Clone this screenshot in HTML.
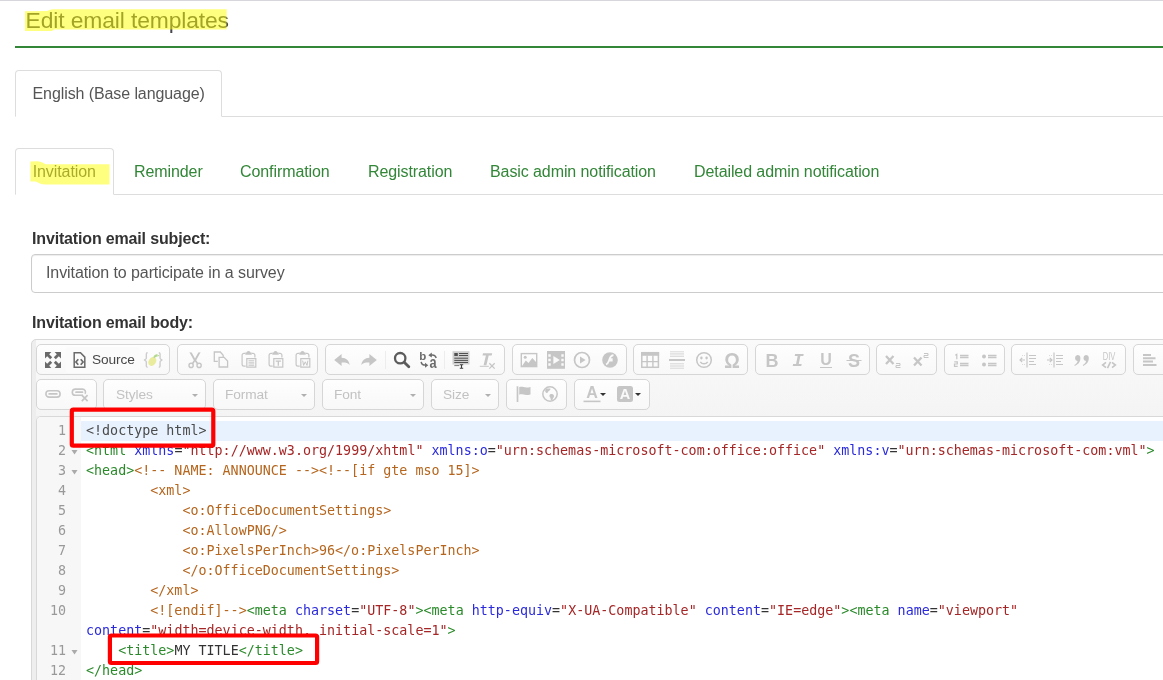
<!DOCTYPE html>
<html lang="en">
<head>
<meta charset="utf-8">
<title>Edit email templates</title>
<style>
*{box-sizing:border-box;margin:0;padding:0}
html,body{width:1163px;height:680px;overflow:hidden;background:#fff}
body{position:relative;will-change:transform;font-family:"Liberation Sans",Arial,sans-serif;font-size:16px;color:#333;letter-spacing:-.09px}
.abs{position:absolute}
#topline{left:0;top:0;width:1163px;height:1px;background:#d6d6dc}
#title{left:25.5px;top:6.5px;font-size:22.86px;letter-spacing:-.12px;line-height:26px;color:#46464e;white-space:nowrap;font-weight:400}
#greenline{left:15px;top:46px;width:1148px;height:2px;background:#328637}
/* language tab */
#langline{left:15px;top:116px;width:1148px;height:1px;background:#ddd}
#langtab{left:15px;top:70px;width:207px;height:47px;border:1px solid #ddd;border-bottom-color:#fff;border-radius:4px 4px 0 0;background:#fff;color:#555;line-height:45px;padding-left:16.5px;white-space:nowrap}
/* sub tabs */
#subline{left:15px;top:194px;width:1148px;height:1px;background:#ddd}
#subtab{left:15px;top:148px;width:99px;height:47px;border:1px solid #ddd;border-bottom-color:#fff;border-radius:4px 4px 0 0;background:#fff}
.tab{top:148px;height:47px;line-height:47px;color:#328637;white-space:nowrap}
.lbl{left:32px;letter-spacing:-.16px;font-weight:700;color:#333;white-space:nowrap;line-height:20px}
#subject{left:31px;top:254px;width:1150px;height:39px;border:1px solid #ccc;border-radius:4px;box-shadow:inset 0 1px 1px rgba(0,0,0,.075);color:#555;line-height:36px;padding-left:14px;white-space:nowrap}
/* editor chrome */
#cke{left:31px;top:339px;width:1150px;height:360px;border:1px solid #d8d8d8;border-radius:5px 0 0 0;background:#eee}
#cketop{left:36px;top:340px;width:1140px;height:76px;background:linear-gradient(#fafafa,#f4f4f4)}
.grp{height:31px;border:1px solid #d6d6d6;border-radius:5px;background:linear-gradient(#fefefe,#f8f8f8)}
.r1{top:344px}
.r2{top:379px}
.ico{width:16px;height:16px;overflow:visible}
.combo{color:#c2c2c2;font-size:13.7px;line-height:29px;padding-left:13px;white-space:nowrap}
.combo i{position:absolute;right:7.3px;top:13.5px;width:0;height:0;border-left:3.2px solid transparent;border-right:3.2px solid transparent;border-top:3.2px solid #b0b0b0}
.sep{width:1px;height:18px;background:#ededed}
/* ace */
#ace{left:36px;top:416px;width:1140px;height:280px;border:1px solid #d8d8d8;border-radius:5px 0 0 0;background:#fff;overflow:hidden}
#gutter{left:37px;top:417px;width:44px;height:270px;background:#f7f7f7;border-radius:4px 0 0 0}
#active{left:81px;top:421px;width:1090px;height:20px;background:#e8f2fe}
.ln{left:37px;width:29px;text-align:right;color:#999}
.fold{left:71px;width:7px;height:20px}
.code,.ln{letter-spacing:0;font-family:"DejaVu Sans Mono","Liberation Mono",monospace;font-size:13.354px;line-height:20px;height:20px;white-space:pre}
.code{left:86px;color:#333}
.t{color:#2a8a2a}.a{color:#2a2adc}.s{color:#a52626}.c{color:#b5651d}.d{color:#4a4a4a}
</style>
</head>
<body>
<div id="topline" class="abs"></div>
<h3 id="title" class="abs">Edit email templates</h3>
<div id="greenline" class="abs"></div>

<div id="langline" class="abs"></div>
<div id="langtab" class="abs">English (Base language)</div>

<div id="subline" class="abs"></div>
<div id="subtab" class="abs"></div>
<div class="abs tab" style="left:32.7px;color:#555">Invitation</div>
<div class="abs tab" style="left:134px">Reminder</div>
<div class="abs tab" style="left:240px">Confirmation</div>
<div class="abs tab" style="left:368px">Registration</div>
<div class="abs tab" style="left:490px">Basic admin notification</div>
<div class="abs tab" style="left:694px">Detailed admin notification</div>

<label class="abs lbl" style="top:228.5px">Invitation email subject:</label>
<div id="subject" class="abs">Invitation to participate in a survey</div>
<label class="abs lbl" style="top:313px">Invitation email body:</label>

<div id="cke" class="abs"></div>
<div id="cketop" class="abs"></div>
<!--TB-START-->
<div class="abs grp r1" style="left:36px;width:134px"></div>
<div class="abs grp r1" style="left:177px;width:141px"></div>
<div class="abs grp r1" style="left:325px;width:180px"></div>
<div class="abs grp r1" style="left:512px;width:115px"></div>
<div class="abs grp r1" style="left:633px;width:115px"></div>
<div class="abs grp r1" style="left:755px;width:115px"></div>
<div class="abs grp r1" style="left:876px;width:61px"></div>
<div class="abs grp r1" style="left:944px;width:61px"></div>
<div class="abs grp r1" style="left:1011px;width:115px"></div>
<div class="abs grp r1" style="left:1133px;width:68px"></div>
<div class="abs grp r2" style="left:36px;width:61px"></div>
<div class="abs grp r2" style="left:506px;width:61px"></div>
<div class="abs grp r2" style="left:574px;width:76px"></div>
<div class="abs" style="left:66px;top:347px;width:74px;height:26px;background:#fbfbfb;border-radius:3px"></div>
<svg class="abs ico" style="left:45.0px;top:352.0px;color:#6a6a6a" viewBox="0 0 16 16"><g fill="currentColor"><path d="M0 0h6.4L4.2 2.2 7.2 5.2 5.2 7.2 2.2 4.2 0 6.4z"/><g transform="rotate(90 8 8)"><path d="M0 0h6.4L4.2 2.2 7.2 5.2 5.2 7.2 2.2 4.2 0 6.4z"/></g><g transform="rotate(180 8 8)"><path d="M0 0h6.4L4.2 2.2 7.2 5.2 5.2 7.2 2.2 4.2 0 6.4z"/></g><g transform="rotate(270 8 8)"><path d="M0 0h6.4L4.2 2.2 7.2 5.2 5.2 7.2 2.2 4.2 0 6.4z"/></g></g></svg>
<svg class="abs ico" style="left:71.5px;top:352.0px;color:#6a6a6a" viewBox="0 0 16 16"><path d="M2.2 .800h6.300l4.3 4.300v10.100H2.200z" fill="none" stroke="currentColor" stroke-width="1.5"/><path d="M6.3 7.200L3.9 10l2.4 2.800M8.7 7.200l2.4 2.8-2.4 2.8" fill="none" stroke="currentColor" stroke-width="1.7"/></svg>
<div class="abs" style="left:92px;top:350px;font-size:13.700px;line-height:20px;color:#484848;white-space:nowrap">Source</div>
<svg class="abs ico" style="left:145.3px;top:352.0px;color:#c6c6c6" viewBox="0 0 16 16"><path d="M2.6 .800C.600 .800 1.6 3.6 1.3 6.2 1.2 7.4-.600 7.6-.600 8s1.8.600 1.9 1.800c.300 2.6-.700 5.4 1.3 5.400M13.8 .800c2 0 1 2.8 1.3 5.4.100 1.2 1.9 1.4 1.9 1.800s-1.8.600-1.9 1.800c-.300 2.6.700 5.4-1.3 5.4" fill="none" stroke="#cdcdcd" stroke-width="1.4"/><ellipse cx="7.3" cy="9.5" rx="3.6" ry="4.5" transform="rotate(30 7.3 9.5)" fill="#e9ec9c"/><path d="M8.2 5.800c.300-2 1.6-3.2 4.4-3.8-.300 2.3-1.8 3.6-4.4 3.800z" fill="#b4d88c"/><path d="M9 5.500c1.5-1 3-1.8 5-2" fill="none" stroke="#b4d88c" stroke-width="1"/></svg>
<svg class="abs ico" style="left:187.0px;top:352.0px;color:#c6c6c6" viewBox="0 0 16 16"><path d="M2.4 .300l2.3 .100 3.3 6 3.3-6 2.3-.100-4.4 8 2.2 3.2-1.4.800L8 9.600l-2 2.7-1.4-.800L6.8 8.300z" fill="currentColor"/><circle cx="4.1" cy="13.4" r="2.1" fill="none" stroke="currentColor" stroke-width="1.4"/><circle cx="12.1" cy="13.4" r="2.1" fill="none" stroke="currentColor" stroke-width="1.4"/></svg>
<svg class="abs ico" style="left:212.5px;top:352.0px;color:#c6c6c6" viewBox="0 0 16 16"><path d="M4.8 9.300H1.300V0H7.300L10.2 3.200V5" fill="none" stroke="currentColor" stroke-width="1.3"/><path d="M6.1 5.400h5l3.5 3.600v6H6.100z" fill="none" stroke="currentColor" stroke-width="1.3"/></svg>
<svg class="abs ico" style="left:240.5px;top:352.0px;color:#c6c6c6" viewBox="0 0 16 16"><path d="M4.2 1.300H3a1.9 1.9 0 0 0-1.9 1.900v9a1.9 1.9 0 0 0 1.9 1.900h1.700M10.8 1.300H12a1.9 1.9 0 0 1 1.9 1.900v2.3" fill="none" stroke="currentColor" stroke-width="1.2"/><path d="M4.3 .600h1.200a2 1.5 0 0 1 4 0h1.200v2.200H4.300z" fill="currentColor"/><path d="M5.8 6.600h9v8.600h-9z" fill="none" stroke="currentColor" stroke-width="1.2"/><path d="M7.5 8.700h5.700M7.5 10.300h5.700M7.5 11.900h5.700M7.5 13.400h5.7" stroke="currentColor" stroke-width=".9"/></svg>
<svg class="abs ico" style="left:267.5px;top:352.0px;color:#c6c6c6" viewBox="0 0 16 16"><path d="M4.2 1.300H3a1.9 1.9 0 0 0-1.9 1.900v9a1.9 1.9 0 0 0 1.9 1.900h1.700M10.8 1.300H12a1.9 1.9 0 0 1 1.9 1.900v2.3" fill="none" stroke="currentColor" stroke-width="1.2"/><path d="M4.3 .600h1.200a2 1.5 0 0 1 4 0h1.200v2.200H4.300z" fill="currentColor"/><path d="M5.8 6.600h9v8.600h-9z" fill="none" stroke="currentColor" stroke-width="1.2"/><path d="M7.7 9.100h5.200M10.3 9.100v4.7" stroke="currentColor" stroke-width="1.3" fill="none"/></svg>
<svg class="abs ico" style="left:294.5px;top:352.0px;color:#c6c6c6" viewBox="0 0 16 16"><path d="M4.2 1.300H3a1.9 1.9 0 0 0-1.9 1.900v9a1.9 1.9 0 0 0 1.9 1.900h1.700M10.8 1.300H12a1.9 1.9 0 0 1 1.9 1.900v2.3" fill="none" stroke="currentColor" stroke-width="1.2"/><path d="M4.3 .600h1.200a2 1.5 0 0 1 4 0h1.200v2.200H4.300z" fill="currentColor"/><path d="M5.8 6.600h9v8.600h-9z" fill="none" stroke="currentColor" stroke-width="1.2"/><path d="M7.7 8.600l.9 4.8 1.7-3.6 1.7 3.6.9-4.8" stroke="currentColor" stroke-width="1" fill="none"/></svg>
<svg class="abs ico" style="left:334.3px;top:352.0px;color:#c6c6c6" viewBox="0 0 16 16"><path d="M7.6 2v3.800c4.6.300 7.5 2.6 8.1 7.2-1.8-2.3-4.2-2.6-8.1-2.500V14L.200 8z" fill="currentColor"/></svg>
<svg class="abs ico" style="left:360.5px;top:352.0px;color:#c6c6c6" viewBox="0 0 16 16"><path d="M8.4 2v3.800c-4.6.300-7.5 2.6-8.1 7.2 1.8-2.3 4.2-2.6 8.1-2.500V14l7.4-6z" fill="currentColor"/></svg>
<svg class="abs ico" style="left:479.0px;top:352.0px;color:#c6c6c6" viewBox="0 0 16 16"><path d="M4 1.300h9.200l-.5 2.300h-3l-2.3 9.700H4.600l2.3-9.700h-3.400z" fill="currentColor"/><path d="M.800 14.300h9" stroke="currentColor" stroke-width="1"/><path d="M10.3 11.200l5.4 5.400M15.7 11.200l-5.4 5.4" stroke="currentColor" stroke-width="1.3"/></svg>
<svg class="abs ico" style="left:520.8px;top:352.0px;color:#c6c6c6" viewBox="0 0 16 16"><rect x=".300" y="1.6" width="15.4" height="13" fill="none" stroke="currentColor" stroke-width="1.4"/><circle cx="4.2" cy="5.2" r="1.5" fill="currentColor"/><path d="M1 14l3.8-5.5 2.7 2.5 3.8-5 3.7 4v4z" fill="currentColor"/></svg>
<svg class="abs ico" style="left:548.0px;top:352.0px;color:#c6c6c6" viewBox="0 0 16 16"><path d="M-1-1h18v17.800H-1z" fill="currentColor"/><path d="M.300 2.200h2.400v2.600H.300zM.300 6.700h2.400v2.600H.300zM.300 11.200h2.400v2.600H.300zM13.3 2.200h2.400v2.600h-2.400zM13.3 6.700h2.400v2.600h-2.400zM13.3 11.200h2.400v2.600h-2.400z" fill="#fafafa"/><path d="M5.4 4l6.4 4-6.4 4z" fill="#fafafa"/></svg>
<svg class="abs ico" style="left:574.3px;top:352.0px;color:#c6c6c6" viewBox="0 0 16 16"><circle cx="8" cy="8" r="7.5" fill="none" stroke="currentColor" stroke-width="1.7"/><path d="M6 4.400l5.6 3.600L6 11.600z" fill="currentColor"/></svg>
<svg class="abs ico" style="left:602.0px;top:352.0px;color:#c6c6c6" viewBox="0 0 16 16"><circle cx="8" cy="8" r="7.8" fill="currentColor"/><path d="M11.5 3.200c-2.5.2-3.3 1.8-4 3.800h2.300v1.600H7c-.7 2-1.4 3.4-3 3.8" fill="none" stroke="#fafafa" stroke-width="1.7"/></svg>
<svg class="abs ico" style="left:641.8px;top:352.0px;color:#c6c6c6" viewBox="0 0 16 16"><rect x="-.200" y=".700" width="16.6" height="14.6" fill="none" stroke="currentColor" stroke-width="1.5"/><rect x="-.900" y="0" width="18" height="3.8" fill="currentColor"/><path d="M-.200 9.600h16.600M5.1 3.500v12M10.9 3.500v12" stroke="currentColor" stroke-width="1.4"/></svg>
<svg class="abs ico" style="left:669.0px;top:352.0px;color:#c6c6c6" viewBox="0 0 16 16"><path d="M1 -.300h14M1 1.300h14M1 2.900h14M1 4.500h14M1 11.600h14M1 13.200h14M1 14.800h14M1 16.400h14" stroke="#dedede" stroke-width="1"/><path d="M0 8h16" stroke="currentColor" stroke-width="2"/></svg>
<svg class="abs ico" style="left:695.9px;top:352.0px;color:#c6c6c6" viewBox="0 0 16 16"><circle cx="8" cy="8" r="7.3" fill="none" stroke="currentColor" stroke-width="1.5"/><ellipse cx="5.4" cy="6" rx="1.2" ry="1.4" fill="currentColor"/><ellipse cx="10.6" cy="6" rx="1.2" ry="1.4" fill="currentColor"/><path d="M4.3 9.800c1.7 2.6 5.7 2.6 7.4 0" fill="none" stroke="currentColor" stroke-width="1.5"/></svg>
<svg class="abs ico" style="left:723.7px;top:352.0px;color:#c6c6c6" viewBox="0 0 16 16"><text x="8" y="15.7" font-size="21.5" font-weight="700" text-anchor="middle" textLength="15.5" lengthAdjust="spacingAndGlyphs" font-family='"Liberation Sans",Arial,sans-serif' fill="currentColor">Ω</text></svg>
<svg class="abs ico" style="left:764.3px;top:352.0px;color:#c6c6c6" viewBox="0 0 16 16"><text x="8" y="14.7" font-size="18" font-weight="700" text-anchor="middle" font-family='"Liberation Sans",Arial,sans-serif' fill="currentColor">B</text></svg>
<svg class="abs ico" style="left:789.8px;top:352.0px;color:#c6c6c6" viewBox="0 0 16 16"><text x="8" y="14.3" font-size="19" font-weight="700" font-style="italic" text-anchor="middle" font-family='"Liberation Mono","Courier New",monospace' fill="currentColor">I</text></svg>
<svg class="abs ico" style="left:818.4px;top:352.0px;color:#c6c6c6" viewBox="0 0 16 16"><text x="8" y="12.8" font-size="16" font-weight="700" text-anchor="middle" font-family='"Liberation Sans",Arial,sans-serif' fill="currentColor">U</text><path d="M2 15.500h12" stroke="currentColor" stroke-width="1"/></svg>
<svg class="abs ico" style="left:845.5px;top:352.0px;color:#c6c6c6" viewBox="0 0 16 16"><text x="8" y="14.5" font-size="18" font-weight="700" text-anchor="middle" font-family='"Liberation Sans",Arial,sans-serif' fill="currentColor">S</text><path d="M.5 8.500h15" stroke="currentColor" stroke-width="1"/></svg>
<svg class="abs ico" style="left:885.0px;top:352.0px;color:#c6c6c6" viewBox="0 0 16 16"><path d="M1 4l7.5 8M8.5 4L1 12" stroke="currentColor" stroke-width="2.3" fill="none"/><path d="M11 11.500h4v2h-4v2h4.5" stroke="currentColor" stroke-width="1" fill="none"/></svg>
<svg class="abs ico" style="left:912.5px;top:352.0px;color:#c6c6c6" viewBox="0 0 16 16"><g transform="translate(0 1.5)"><path d="M1 4l7.5 8M8.5 4L1 12" stroke="currentColor" stroke-width="2.3" fill="none"/></g><path d="M11 1.500h4v2h-4v2h4.5" stroke="currentColor" stroke-width="1" fill="none"/></svg>
<svg class="abs ico" style="left:953.1px;top:352.0px;color:#c6c6c6" viewBox="0 0 16 16"><path d="M7 3.500h8.500M7 5.500h8.500M7 11.500h8.500M7 13.500h8.5" stroke="currentColor" stroke-width="1.3"/><path d="M2.3 3.300l1.5-1v5M1.3 9.800h3v2.200H1.500v2.300H4.7" fill="none" stroke="currentColor" stroke-width="1.2"/></svg>
<svg class="abs ico" style="left:980.6px;top:352.0px;color:#c6c6c6" viewBox="0 0 16 16"><path d="M7 3.500h8.500M7 5.500h8.500M7 11.500h8.500M7 13.500h8.5" stroke="currentColor" stroke-width="1.3"/><circle cx="3" cy="4.4" r="2" fill="currentColor"/><circle cx="3" cy="12.4" r="2" fill="currentColor"/></svg>
<svg class="abs ico" style="left:1019.8px;top:352.0px;color:#c6c6c6" viewBox="0 0 16 16"><path d="M7 .5v15" stroke="currentColor" stroke-width="1.2"/><path d="M9 3.500h7M9 6.500h7M9 9.500h5M9 12.500h7" stroke="currentColor" stroke-width="1.2"/><path d="M0 8h5M2.2 5.800L0 8l2.2 2.2" fill="none" stroke="currentColor" stroke-width="1.2"/><path d="M2 3.500h4M2 12.500h4" stroke="#dcdcdc" stroke-width="1" stroke-dasharray="1 1"/></svg>
<svg class="abs ico" style="left:1047.0px;top:352.0px;color:#c6c6c6" viewBox="0 0 16 16"><path d="M7 .5v15" stroke="currentColor" stroke-width="1.2"/><path d="M9 3.500h7M9 6.500h7M9 9.500h5M9 12.500h7" stroke="currentColor" stroke-width="1.2"/><path d="M0 8h5M2.8 5.800L5 8l-2.2 2.2" fill="none" stroke="currentColor" stroke-width="1.2"/><path d="M2 3.500h4M2 12.500h4" stroke="#dcdcdc" stroke-width="1" stroke-dasharray="1 1"/></svg>
<svg class="abs ico" style="left:1074.0px;top:352.0px;color:#c6c6c6" viewBox="0 0 16 16"><path d="M3.4 3.100a3 3 0 0 1 3 3c0 3.8-2.2 6.6-5.6 7.800l-.4-.8c1.8-1 3-2.4 3.2-4.100a3 3 0 0 1-.2-5.900z" fill="currentColor"/><path d="M11.8 3.100a3 3 0 0 1 3 3c0 3.8-2.2 6.6-5.6 7.800l-.4-.8c1.8-1 3-2.4 3.2-4.100a3 3 0 0 1-.2-5.900z" fill="currentColor"/></svg>
<svg class="abs ico" style="left:1101.2px;top:352.0px;color:#c6c6c6" viewBox="0 0 16 16"><text x="8" y="8" font-size="11" text-anchor="middle" textLength="12.5" lengthAdjust="spacingAndGlyphs" font-family='"Liberation Sans",Arial,sans-serif' fill="currentColor">DIV</text><path d="M5 10.300L1.6 13l3.4 2.600M11 10.300l3.4 2.7-3.4 2.600M9.5 9.800l-3 6.4" fill="none" stroke="currentColor" stroke-width="1.6"/></svg>
<svg class="abs ico" style="left:1142.0px;top:352.0px;color:#c6c6c6" viewBox="0 0 16 16"><path d="M1 3h8M1 6.300h12.500M1 9.600h10M1 12.900h13.5" stroke="currentColor" stroke-width="2"/></svg>
<svg class="abs ico" style="left:394.0px;top:352.0px;color:#5c5c5c" viewBox="0 0 16 16"><circle cx="6.2" cy="6.2" r="5.2" fill="none" stroke="currentColor" stroke-width="2.3"/><path d="M10.2 10.200l4.6 4.6" stroke="currentColor" stroke-width="2.8" stroke-linecap="round"/></svg>
<svg class="abs ico" style="left:420.3px;top:352.0px;color:#6c6c6c" viewBox="0 0 16 16"><text x="-.800" y="7.7" font-size="11.5" font-weight="700" font-family='"Liberation Sans",Arial,sans-serif' fill="currentColor">b</text><text transform="translate(9.4 16.3) scale(.75 1)" font-size="17" font-weight="700" font-family='"Liberation Sans",Arial,sans-serif' fill="currentColor">a</text><path d="M10.5 3.300c2.8-.800 4.8.300 5.8 2.6" fill="none" stroke="currentColor" stroke-width="1.5"/><path d="M8.3 3.200l3.5-2.700v5z" fill="currentColor"/><path d="M1.2 9.800c.300 2.3 1.8 3.4 4.4 3.3" fill="none" stroke="currentColor" stroke-width="1.5"/><path d="M8.3 13.200l-3.3 2.500v-5z" fill="currentColor"/></svg>
<svg class="abs ico" style="left:452.5px;top:352.0px;color:#606060" viewBox="0 0 16 16"><rect x="-.500" y="-.800" width="17" height="13.3" fill="#cfcfcf"/><rect x="1.3" y="1" width="3.5" height="3" fill="#505050"/><path d="M6 1.500h9M6 3.500h9M1.3 6.200h13.700M1.3 8.400h13.700M1.3 10.500h13.7" stroke="#505050" stroke-width="1"/><path d="M1.3 13.500h5" stroke="#888" stroke-width="1.2"/><path d="M6.8 12.700h3.400M8.5 12.700v3.600M6.8 16.300h3.4" stroke="#3c3c3c" stroke-width="1.1"/></svg>
<div class="abs sep" style="left:385px;top:351px"></div>
<div class="abs sep" style="left:444px;top:351px"></div>
<svg class="abs ico" style="left:45.0px;top:385.5px;color:#c6c6c6" viewBox="0 0 16 16"><rect x=".900" y="4.7" width="14.2" height="6.4" rx="3.2" fill="none" stroke="currentColor" stroke-width="1.6"/><path d="M4.2 7.900h7.6" stroke="currentColor" stroke-width="1.8" stroke-linecap="round"/></svg>
<svg class="abs ico" style="left:72.2px;top:385.5px;color:#c6c6c6" viewBox="0 0 16 16"><path d="M10.8 9.300H3.400a3.1 3.1 0 0 1 0-6.200h7a3.1 3.1 0 0 1 2.6 4.8" fill="none" stroke="currentColor" stroke-width="1.6"/><path d="M4 6.200h6.5" stroke="currentColor" stroke-width="1.7" stroke-linecap="round"/><path d="M9.8 9.200l5.8 6M15.6 9.200l-5.8 6" stroke="currentColor" stroke-width="1.7"/></svg>
<svg class="abs ico" style="left:515.6px;top:385.5px;color:#c6c6c6" viewBox="0 0 16 16"><path d="M1.5 .300v15.7" stroke="currentColor" stroke-width="1.7"/><path d="M3.2 1.300c3-1.5 5 1.5 11.3-.3v7.500c-6.3 1.8-8.3-1.2-11.3 .3z" fill="currentColor"/></svg>
<svg class="abs ico" style="left:541.7px;top:385.5px;color:#c6c6c6" viewBox="0 0 16 16"><circle cx="8" cy="8" r="7.2" fill="none" stroke="currentColor" stroke-width="1.5"/><path d="M3.8 3c1.5-.800 3-.300 4.5-.500.5 1.2-.500 2-1.5 2.500S6 7.5 4.5 7 2.8 4.2 3.8 3zM8.3 8.200c1.7-.500 3.4.300 3.7 1.500s-1 2-1.3 3.500c-.200 1.2-1.2 1.5-1.7.800s-.200-2-1-2.8-.800-2.6.300-3z" fill="currentColor"/></svg>
<svg class="abs ico" style="left:584.3px;top:385.5px;color:#c6c6c6" viewBox="0 0 16 16"><text x="8" y="12.3" font-size="16" font-weight="700" text-anchor="middle" font-family='"Liberation Sans",Arial,sans-serif' fill="currentColor">A</text><path d="M-.500 15.400h17" stroke="currentColor" stroke-width="1.6"/></svg>
<svg class="abs ico" style="left:616.8px;top:385.5px;color:#c6c6c6" viewBox="0 0 16 16"><rect x="0" y="0" width="16" height="16" rx="2.5" fill="currentColor"/><text x="8" y="13.3" font-size="14.5" font-weight="700" text-anchor="middle" font-family='"Liberation Sans",Arial,sans-serif' fill="#fafafa">A</text></svg>
<div class="abs" style="left:600.3px;top:393px;width:0;height:0;border-left:3.500px solid transparent;border-right:3.500px solid transparent;border-top:3.500px solid #333"></div>
<div class="abs" style="left:635.3px;top:393px;width:0;height:0;border-left:3.500px solid transparent;border-right:3.500px solid transparent;border-top:3.500px solid #333"></div>
<div class="abs grp r2 combo" style="left:103px;width:103px;padding-left:12px">Styles<i></i></div>
<div class="abs grp r2 combo" style="left:213px;width:102px;padding-left:11px">Format<i></i></div>
<div class="abs grp r2 combo" style="left:322px;width:102px;padding-left:11px">Font<i></i></div>
<div class="abs grp r2 combo" style="left:431px;width:68px;padding-left:11px">Size<i></i></div>
<!--TB-END-->
<div id="ace" class="abs"></div>
<div id="gutter" class="abs"></div>
<div id="active" class="abs"></div>
<!--CODE-START-->
<div class="abs ln" style="top:421px">1</div>
<div class="abs code" style="top:421px"><span class="d">&lt;!doctype html&gt;</span></div>
<div class="abs ln" style="top:441px">2</div>
<svg class="abs fold" style="top:441px" viewBox="0 0 7 20"><path d="M0.5 9h6l-3 4.5z" fill="#aaa"/></svg>
<div class="abs code" style="top:441px"><span class="t">&lt;html</span> <span class="a">xmlns</span>=<span class="s">"http://www.w3.org/1999/xhtml"</span> <span class="a">xmlns:o</span>=<span class="s">"urn:schemas-microsoft-com:office:office"</span> <span class="a">xmlns:v</span>=<span class="s">"urn:schemas-microsoft-com:vml"</span><span class="t">&gt;</span></div>
<div class="abs ln" style="top:461px">3</div>
<svg class="abs fold" style="top:461px" viewBox="0 0 7 20"><path d="M0.5 9h6l-3 4.5z" fill="#aaa"/></svg>
<div class="abs code" style="top:461px"><span class="t">&lt;head&gt;</span><span class="c">&lt;!-- NAME: ANNOUNCE --&gt;&lt;!--[if gte mso 15]&gt;</span></div>
<div class="abs ln" style="top:481px">4</div>
<div class="abs code" style="top:481px"><span class="c">        &lt;xml&gt;</span></div>
<div class="abs ln" style="top:501px">5</div>
<div class="abs code" style="top:501px"><span class="c">            &lt;o:OfficeDocumentSettings&gt;</span></div>
<div class="abs ln" style="top:521px">6</div>
<div class="abs code" style="top:521px"><span class="c">            &lt;o:AllowPNG/&gt;</span></div>
<div class="abs ln" style="top:541px">7</div>
<div class="abs code" style="top:541px"><span class="c">            &lt;o:PixelsPerInch&gt;96&lt;/o:PixelsPerInch&gt;</span></div>
<div class="abs ln" style="top:561px">8</div>
<div class="abs code" style="top:561px"><span class="c">            &lt;/o:OfficeDocumentSettings&gt;</span></div>
<div class="abs ln" style="top:581px">9</div>
<div class="abs code" style="top:581px"><span class="c">        &lt;/xml&gt;</span></div>
<div class="abs ln" style="top:601px">10</div>
<div class="abs code" style="top:601px"><span class="c">        &lt;![endif]--&gt;</span><span class="t">&lt;meta</span> <span class="a">charset</span>=<span class="s">"UTF-8"</span><span class="t">&gt;</span><span class="t">&lt;meta</span> <span class="a">http-equiv</span>=<span class="s">"X-UA-Compatible"</span> <span class="a">content</span>=<span class="s">"IE=edge"</span><span class="t">&gt;</span><span class="t">&lt;meta</span> <span class="a">name</span>=<span class="s">"viewport"</span></div>
<div class="abs code" style="top:621px"><span class="a">content</span>=<span class="s">"width=device-width, initial-scale=1"</span><span class="t">&gt;</span></div>
<div class="abs ln" style="top:641px">11</div>
<svg class="abs fold" style="top:641px" viewBox="0 0 7 20"><path d="M0.5 9h6l-3 4.5z" fill="#aaa"/></svg>
<div class="abs code" style="top:641px">    <span class="t">&lt;title&gt;</span>MY TITLE<span class="t">&lt;/title&gt;</span></div>
<div class="abs ln" style="top:661px">12</div>
<div class="abs code" style="top:661px"><span class="t">&lt;/head&gt;</span></div>
<!--CODE-END-->
<!--OV-START-->
<svg class="abs" style="left:0;top:0;width:1163px;height:680px" viewBox="0 0 1163 680">
<rect x="71.800" y="409.700" width="141.500" height="36" rx="1.500" fill="none" stroke="#fe0000" stroke-width="4.200"/>
<rect x="109.900" y="635.500" width="207.200" height="27.500" rx="1.500" fill="none" stroke="#fe0000" stroke-width="4.200"/>
<path d="M25 11.200L47 10.900 52 9.200H226.700V29.600H54L52 31H25z" fill="rgba(255,255,0,.5)"/>
<path d="M30.400 161.500L38 161.300Q42 162 45.600 164.300H109.500V184.600H45Q40 184 35.500 181.500H30.400z" fill="rgba(255,255,0,.5)"/>
</svg>
<!--OV-END-->
</body>
</html>
